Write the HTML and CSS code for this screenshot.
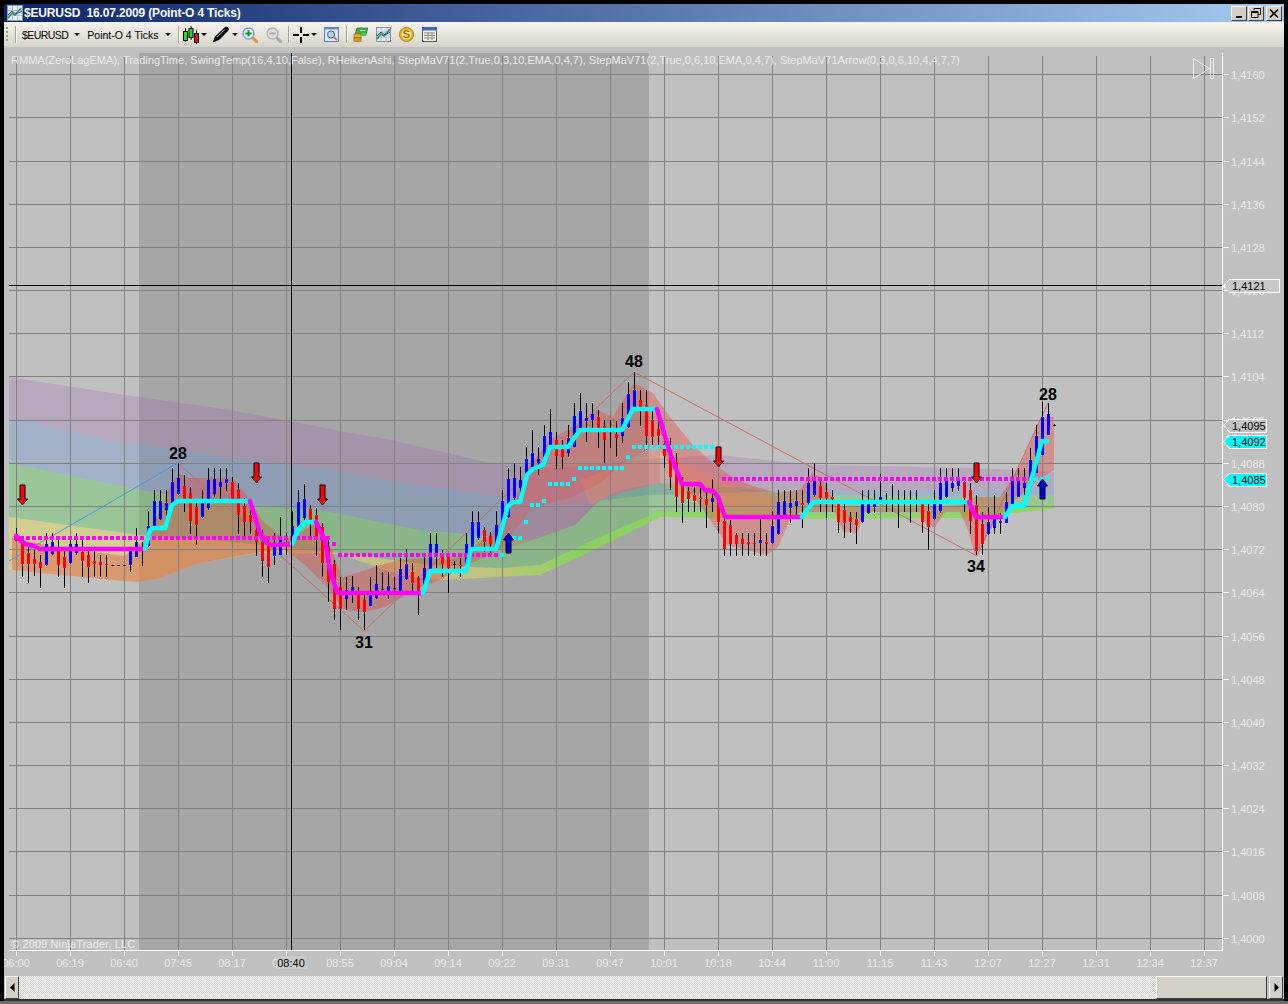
FILE: index.html
```html
<!DOCTYPE html>
<html lang="en">
<head>
    <meta charset="UTF-8">
    <meta name="viewport" content="width=device-width, initial-scale=1.0">
    <title>$EURUSD 16.07.2009 (Point-O 4 Ticks)</title>
    <link rel="stylesheet" href="styles.css">
</head>
<body>
    <div class="window">

        <!-- Title bar -->
        <div class="titlebar">
            <svg class="app-icon" width="16" height="16" viewBox="0 0 16 16">
                <rect x="0.5" y="0.5" width="15" height="15" fill="#e8eef8" stroke="#8a9ab8"/>
                <path d="M1 5.5H15M1 10.5H15M5.5 1V15M10.5 1V15" stroke="#b4c2da"/>
                <path d="M1 13L5 8L8 10L14 3" fill="none" stroke="#2a9a3a" stroke-width="1.6"/>
                <path d="M1 10L5 6L9 9L15 6" fill="none" stroke="#2050c0"/>
            </svg>
            <span class="title-text">$EURUSD&nbsp; 16.07.2009 (Point-O 4 Ticks)</span>
            <div class="window-buttons">
                <div class="win-btn">
                    <svg width="9" height="9" viewBox="0 0 9 9"><rect x="1" y="7" width="6" height="2"/></svg>
                </div>
                <div class="win-btn">
                    <svg width="10" height="10" viewBox="0 0 10 10"><path d="M3 0.5H9.5V6.5H7.5M3 2V0.5M0.5 3.5H7V9.5H0.5Z M0.5 4.5H7" fill="none" stroke="#000"/></svg>
                </div>
                <div class="win-btn win-close">
                    <svg width="10" height="9" viewBox="0 0 10 9"><path d="M1 0.5L9 8.5M9 0.5L1 8.5" stroke="#000" stroke-width="1.6"/></svg>
                </div>
            </div>
        </div>

        <!-- Toolbar -->
        <div class="toolbar">
            <div class="grip"></div>
            <div class="sep sep-first"></div>
            <span class="tool-text">$EURUSD</span>
            <span class="caret caret-text"></span>
            <span class="tool-text tool-period">Point-O 4 Ticks</span>
            <span class="caret caret-text"></span>
            <div class="sep sep-a"></div>

            <svg class="tool-icon icon-candles" width="16" height="18" viewBox="0 0 16 18">
                <path d="M2.5 2V16M8 0V14M13.5 4V18" stroke="#000"/>
                <rect x="0.5" y="5.5" width="4" height="9" fill="#20e020" stroke="#000"/>
                <rect x="6" y="2.5" width="4" height="9" fill="#20e020" stroke="#000"/>
                <rect x="11.5" y="7.5" width="4" height="9" fill="#e01010" stroke="#000"/>
            </svg>
            <span class="caret"></span>

            <svg class="tool-icon icon-pen" width="18" height="17" viewBox="0 0 18 17">
                <path d="M0.5 16.5L3 10.5L13 1C15 0 18 2.5 16.5 4.5L7 14Z" fill="#000"/>
                <path d="M5 11L13 3.5" stroke="#b0b0b0"/>
            </svg>
            <span class="caret"></span>

            <svg class="tool-icon icon-zoom-in" width="16" height="16" viewBox="0 0 16 16">
                <path d="M10 10L15 15" stroke="#e89038" stroke-width="3" stroke-linecap="round"/>
                <circle cx="6.5" cy="6.5" r="5.5" fill="#e4f0f8" stroke="#7aa4c0" stroke-width="1.4"/>
                <path d="M6.5 3.5V9.5M3.5 6.5H9.5" stroke="#109030" stroke-width="2"/>
            </svg>
            <svg class="tool-icon icon-zoom-out" width="16" height="16" viewBox="0 0 16 16">
                <path d="M10 10L15 15" stroke="#a8a8a8" stroke-width="3" stroke-linecap="round"/>
                <circle cx="6.5" cy="6.5" r="5.5" fill="#dedede" stroke="#b0b0b0" stroke-width="1.4"/>
                <path d="M3.5 6.5H9.5" stroke="#a8a8a8" stroke-width="2"/>
            </svg>
            <div class="sep sep-b"></div>

            <svg class="tool-icon icon-cross" width="16" height="16" viewBox="0 0 16 16">
                <path d="M8 0V6M8 10V16M0 8H6M10 8H16" stroke="#000" stroke-width="2"/>
            </svg>
            <span class="caret"></span>

            <svg class="tool-icon icon-props" width="15" height="15" viewBox="0 0 15 15">
                <rect x="0.5" y="0.5" width="14" height="14" fill="#dce8f6" stroke="#5a80b8"/>
                <rect x="0.5" y="0.5" width="14" height="2" fill="#6a90c8"/>
                <circle cx="7" cy="7.5" r="3.5" fill="#b8d0ea" stroke="#47658c"/>
                <path d="M10 10L13 13" stroke="#e07030" stroke-width="2"/>
            </svg>
            <div class="sep sep-c"></div>

            <svg class="tool-icon icon-stack" width="15" height="15" viewBox="0 0 15 15">
                <path d="M4 1H15L13 7H5L2 8Z" fill="#3cb043" stroke="#1f6a28" stroke-width="0.6"/>
                <path d="M7 3.5H12" stroke="#c8f0c0"/>
                <rect x="1" y="7" width="7" height="4" fill="#e8b030" stroke="#8a6010" stroke-width="0.6"/>
                <rect x="1" y="10.5" width="7" height="4" fill="#d89820" stroke="#8a6010" stroke-width="0.6"/>
                <path d="M8 6H14L13 9H8Z" fill="#58c050"/>
            </svg>
            <svg class="tool-icon icon-chart" width="15" height="15" viewBox="0 0 15 15">
                <rect x="0.5" y="0.5" width="14" height="14" fill="#e4eaf4" stroke="#8a8fa8"/>
                <path d="M1 5H14M1 10H14M5 1V14M10 1V14" stroke="#b4bcd0"/>
                <path d="M1 12L5 7L8 9L14 2" fill="none" stroke="#2a9a3a" stroke-width="1.6"/>
                <path d="M1 9L5 5L9 8L14 5" fill="none" stroke="#2050c0"/>
            </svg>
            <svg class="tool-icon icon-coin" width="15" height="15" viewBox="0 0 15 15">
                <circle cx="7.5" cy="7.5" r="7" fill="#f0b818" stroke="#b07c08"/>
                <circle cx="7.5" cy="7.5" r="4.8" fill="#f8e8a0"/>
                <text class="coin-text" x="7.5" y="11.4" text-anchor="middle">S</text>
            </svg>
            <svg class="tool-icon icon-table" width="15" height="15" viewBox="0 0 15 15">
                <rect x="0.5" y="0.5" width="14" height="14" fill="#f4f2e4" stroke="#4c5c78"/>
                <rect x="0.5" y="0.5" width="14" height="3" fill="#3c6cc4"/>
                <path d="M2 6H13M2 8.5H13M2 11H13" stroke="#8a8f80"/>
                <path d="M6 5V13M10 5V13" stroke="#8a8f80"/>
            </svg>
        </div>

        <!-- Chart panel, filled by chart.js -->
        <div class="chart" id="chart"></div>

        <!-- Horizontal scroll bar -->
        <div class="scrollbar">
            <div class="scroll-btn">
                <svg width="5" height="9" viewBox="0 0 5 9"><path d="M4.5 0V9L0 4.5Z"/></svg>
            </div>
            <div class="scroll-track"></div>
            <div class="scroll-thumb"></div>
            <div class="scroll-btn scroll-btn-right">
                <svg width="5" height="9" viewBox="0 0 5 9"><path d="M0.5 0V9L5 4.5Z"/></svg>
            </div>
        </div>
    </div>

    <script src="chart.js"></script>
</body>
</html>
```

FILE: styles.css
```css
body {
    margin: 0;
    height: 1004px;
    overflow: hidden; /* Prevent scrollbars */
    background-color: #000;
    font-family: "Liberation Sans", Arial, sans-serif;
}

.window {
    display: flex;
    flex-direction: column;
    width: 1280px;
    height: 997px;
    padding: 4px 4px 0 4px;
    border-bottom: 3px solid #6e6e6e;
}

/* Title bar */
.titlebar {
    display: flex;
    align-items: center;
    height: 18px;
    padding: 0 2px 0 3px;
    background: linear-gradient(to right, #0a246a, #a6caf0);
    color: #fff;
    flex-shrink: 0;
}

.app-icon {
    margin-right: 1px;
}

.title-text {
    font-size: 12px;
    font-weight: bold;
    letter-spacing: -0.16px;
    white-space: pre;
}

.window-buttons {
    display: flex;
    margin-left: auto;
    gap: 1px;
}

.win-btn {
    display: flex;
    align-items: center;
    justify-content: center;
    width: 14px;
    height: 13px;
    background-color: #d4d0c8;
    border: 1px solid;
    border-color: #fff #404040 #404040 #fff;
}

.win-close {
    margin-left: 1px;
}

/* Toolbar */
.toolbar {
    display: flex;
    align-items: center;
    height: 25px;
    flex-shrink: 0;
    background: linear-gradient(to bottom, #f6f4ee, #d8d4ca);
    color: #000;
}

.grip {
    width: 2px;
    height: 16px;
    margin-left: 2px;
    background-image: linear-gradient(to bottom, #a09c90 2px, transparent 2px);
    background-size: 2px 4px;
}

.sep {
    width: 1px;
    height: 17px;
    background-color: #a8a49a;
    border-right: 1px solid #fff;
}

.sep-first { margin-left: 7px; margin-right: 5px; }
.sep-a { margin-left: 7px; margin-right: 3px; }
.sep-b { margin-left: 6px; margin-right: 3px; }
.sep-c { margin-left: 7px; margin-right: 5px; }

.tool-text {
    font-family: "Liberation Sans", Arial, sans-serif;
    font-size: 10.5px;
    letter-spacing: -0.55px;
    white-space: nowrap;
}

.tool-period {
    margin-left: 7px;
    letter-spacing: 0;
}

.caret {
    width: 0;
    height: 0;
    margin-left: 2px;
    border-left: 3px solid transparent;
    border-right: 3px solid transparent;
    border-top: 3px solid #000;
}

.caret-text {
    margin-left: 6px;
}

.tool-icon {
    flex-shrink: 0;
}

.icon-candles { margin-left: 0; }
.icon-pen { margin-left: 5px; }
.icon-zoom-in { margin-left: 4px; }
.icon-zoom-out { margin-left: 8px; }
.icon-cross { margin-left: 0; }
.icon-props { margin-left: 7px; }
.icon-chart { margin-left: 8px; }
.icon-coin { margin-left: 8px; }
.icon-table { margin-left: 8px; }

.coin-text {
    font-family: "Liberation Sans", Arial, sans-serif;
    font-size: 11px;
    font-weight: bold;
    fill: #a87008;
}

/* Chart panel */
.chart {
    position: relative;
    flex: 1;
    min-height: 0;
    background-color: #c0c0c0;
}

.chart svg {
    display: block;
}

.session { fill: #a6a6a6; }
.grid { stroke: #808080; stroke-width: 1; shape-rendering: crispEdges; }
.axis { stroke: #fff; stroke-width: 1; shape-rendering: crispEdges; }
.crosshair { stroke: #000; stroke-width: 1; shape-rendering: crispEdges; }

.wick { stroke: #000; stroke-width: 1; shape-rendering: crispEdges; }
.body { shape-rendering: crispEdges; }
.up { fill: #0000ff; }
.down { fill: #ff0000; }
.flat { fill: #000; }

.swing { fill: none; stroke-width: 1; }
.swing-up { stroke: #4a94e0; }
.swing-down { stroke: #c86a62; }

.trend { fill: none; stroke-width: 4.5; stroke-linejoin: round; stroke-linecap: round; }
.trend-up { stroke: #00ffff; }
.trend-down { stroke: #ff00ff; }

.dot { shape-rendering: crispEdges; }
.dot-up { fill: #00ffff; }
.dot-down { fill: #ff00ff; }

.arrow { stroke: #000; stroke-width: 1; }
.arrow-down { fill: #ff0000; }
.arrow-up { fill: #0000e0; }

.label {
    font-family: "Liberation Sans", Arial, sans-serif;
    font-size: 11px;
    fill: #ececec;
}

.indicators {
    letter-spacing: 0.02px;
}

.copyright {
    letter-spacing: 0.12px;
}

.swing-count {
    font-family: "Liberation Sans", Arial, sans-serif;
    font-size: 16px;
    font-weight: bold;
    fill: #000;
}

.marker-text {
    font-family: "Liberation Sans", Arial, sans-serif;
    font-size: 11px;
    fill: #000;
}

.marker { stroke: #fff; stroke-width: 1; shape-rendering: crispEdges; }
.marker-cyan { fill: #00ffff; }
.marker-plain { fill: #c0c0c0; fill-opacity: 0.7; }
.marker-cross { fill: #c8c8c8; }

.time-box { fill: #cacaca; }

.play-icon { fill: none; stroke: #f0f0f0; stroke-width: 1; }

/* Scroll bar */
.scrollbar {
    display: flex;
    height: 25px;
    flex-shrink: 0;
    box-sizing: border-box;
    border-bottom: 2px solid #303030;
    background-color: #c0c0c0;
}

.scroll-btn {
    display: flex;
    align-items: center;
    justify-content: center;
    width: 12px;
    margin-left: 1px;
    background-color: #d4d0c8;
    border: 1px solid;
    border-color: #fff #404040 #404040 #fff;
    flex-shrink: 0;
}

.scroll-btn-right {
    margin-left: 2px;
    margin-right: 1px;
}

.scroll-track {
    flex: 1;
    background-image: repeating-conic-gradient(#fff 0 25%, #d4d0c8 0 50%);
    background-size: 2px 2px;
}

.scroll-thumb {
    width: 109px;
    background-color: #d4d0c8;
    border: 1px solid;
    border-color: #fff #404040 #404040 #fff;
}
```

FILE: chart.js
```js
// Draws the whole chart panel as one svg, from the data below
const SVG_NS = 'http://www.w3.org/2000/svg';
const OFFSET_X = 4;   // panel position on the page, the data is in page pixels
const OFFSET_Y = 47;

const AXIS_X = 1222;
const AXIS_Y = 950;
const PLOT_LEFT = 9;
const PLOT_TOP = 53;

const TIMES = ['06:00', '06:19', '06:40', '07:45', '08:17', '08:29', '08:55', '09:04', '09:14', '09:22', '09:31',
    '09:47', '10:01', '10:18', '10:44', '11:00', '11:15', '11:43', '12:07', '12:27', '12:31', '12:34', '12:37'];

// Cloud edges, as "x,y x,y" in page pixels
const PURPLE_TOP = '9,377 60,385 139,397 230,410 320,427 400,442 490,463 560,468 640,460 717,455 817,465 970,468 1054,472';
const BLUE_TOP = '9,417 110,440 230,458 320,468 420,486 500,497 560,505 650,495 820,490 970,490 1054,487';
const GREEN_TOP = '9,463 139,490 240,505 320,510 420,530 533,540 575,525 600,500 630,490 660,483 720,487 820,495 970,497 1054,495';
const YELLOW_TOP = '9,517 139,535 213,540 340,553 430,565 500,568 540,565 600,537 660,511 730,512 800,514 960,513 1054,504';
const YELLOW_BOTTOM = '9,570 60,575 123,581 139,582 160,578 200,563 260,553 340,554 400,575 440,580 500,577 540,575 600,547 660,517 730,518 800,519 960,518 1054,509';

const RED_TOP = '12,538 60,548 125,556 145,540 160,510 172,482 180,474 190,478 232,478 248,497 262,520 285,540 305,530 318,522 330,545 342,577 360,572 380,565 400,560 420,558 450,560 472,548 490,535 510,510 530,465 550,440 587,418 597,410 613,417 628,392 634,383 653,393 670,417 683,433 693,445 717,467 733,477 750,485 777,493 800,490 812,473 822,478 837,507 917,508 960,505 975,497 1000,497 1020,465 1035,432 1042,417 1054,417';
const RED_BOTTOM = '12,570 60,575 123,581 139,582 160,578 200,563 262,552 285,550 305,565 325,585 345,610 364,612 385,607 415,590 440,580 463,567 500,550 515,530 533,507 573,497 600,483 627,460 653,447 660,450 680,480 700,505 727,545 767,555 778,547 790,520 800,512 835,512 843,532 857,533 865,512 920,512 927,527 935,527 945,512 960,512 968,530 975,555 982,545 990,530 998,518 1010,505 1024,492 1040,478 1054,470';
const PEACH = '580,480 620,465 660,450 700,470 740,490 770,497 790,512 700,508 660,483 620,490 590,505';
const PINK = '500,550 533,507 573,497 600,483 627,460 653,447 660,450 660,483 630,490 600,500 575,525 533,540';

// Candles from left to right, 6px apart: [high, body top, body bottom, low, colour]
const CANDLES = [
    [528,534,541,541,'r'],[537,540,564,577,'r'],[543,553,564,583,'r'],[550,559,564,576,'r'],[555,562,568,588,'r'],
    [533,544,565,566,'b'],[533,542,554,555,'b'],[540,551,565,577,'r'],[548,557,568,588,'r'],[537,544,563,564,'b'],
    [533,544,553,555,'b'],[540,552,561,577,'r'],[550,555,567,583,'r'],[551,561,564,577,'r'],[555,562,565,577,'r'],
    [555,564,565,577,'r'],[565,565,566,566,'k'],[565,565,566,566,'k'],[565,565,566,566,'k'],[547,550,565,572,'b'],
    [528,542,557,557,'b'],[542,550,551,566,'k'],[511,526,546,547,'b'],[490,501,527,528,'b'],[490,501,519,520,'b'],
    [490,503,510,516,'b'],[468,482,503,503,'b'],[463,478,494,495,'b'],[475,486,499,512,'r'],[487,493,521,534,'r'],
    [500,507,525,545,'r'],[490,500,517,518,'b'],[468,480,508,510,'b'],[468,479,494,497,'b'],[468,482,487,499,'b'],
    [468,479,483,491,'b'],[477,482,499,500,'r'],[483,490,515,534,'r'],[498,506,522,536,'r'],[510,515,522,534,'r'],
    [520,530,542,556,'r'],[530,542,561,577,'r'],[537,543,567,583,'r'],[533,543,556,565,'b'],[517,538,555,555,'b'],
    [533,544,545,555,'k'],[511,526,545,546,'b'],[490,502,527,527,'b'],[484,499,518,520,'b'],[505,509,520,537,'r'],
    [508,515,537,556,'r'],[523,527,563,577,'r'],[537,547,582,602,'r'],[560,564,609,620,'r'],[577,587,609,630,'r'],
    [577,590,599,610,'b'],[576,587,593,603,'b'],[587,593,609,620,'r'],[593,600,612,630,'r'],[577,593,606,606,'b'],
    [565,584,598,599,'b'],[572,589,590,590,'k'],[572,586,591,599,'b'],[577,588,589,593,'k'],[558,569,591,591,'b'],
    [549,564,579,580,'b'],[563,572,583,593,'r'],[576,578,593,615,'r'],[557,568,590,591,'b'],[533,544,570,572,'b'],
    [533,544,556,568,'b'],[550,553,564,577,'r'],[554,557,568,593,'r'],[561,564,565,570,'k'],[558,565,566,577,'r'],
    [533,544,567,567,'b'],[511,522,548,550,'b'],[511,522,538,540,'b'],[527,530,542,552,'r'],[532,536,544,553,'r'],
    [511,525,547,548,'b'],[490,501,525,527,'b'],[468,479,517,518,'b'],[463,478,498,500,'b'],[467,480,488,502,'b'],
    [447,459,477,478,'b'],[430,453,467,468,'b'],[447,459,463,475,'b'],[425,436,457,458,'b'],[409,432,447,448,'b'],
    [432,440,456,469,'r'],[440,449,457,469,'r'],[425,438,453,457,'b'],[403,416,447,447,'b'],[393,411,430,430,'b'],
    [403,418,421,442,'b'],[403,414,420,430,'b'],[410,417,430,448,'r'],[420,426,440,463,'r'],[420,431,432,448,'k'],
    [421,434,438,457,'r'],[403,418,436,443,'b'],[382,394,427,428,'b'],[372,390,409,410,'b'],[390,400,407,426,'r'],
    [390,405,436,450,'r'],[410,420,437,445,'r'],[420,429,436,445,'r'],[435,444,456,468,'r'],[438,450,477,490,'r'],
    [453,462,497,512,'r'],[477,483,503,523,'r'],[487,491,499,512,'r'],[487,495,501,512,'r'],[487,498,499,512,'r'],
    [490,499,505,528,'r'],[479,498,502,512,'b'],[495,497,522,533,'r'],[513,521,549,556,'r'],[520,525,544,556,'r'],
    [533,535,544,556,'r'],[533,539,544,556,'r'],[533,542,544,556,'r'],[533,543,544,556,'r'],[519,540,543,556,'b'],
    [533,542,544,556,'r'],[511,526,543,544,'b'],[490,502,534,535,'b'],[490,501,515,516,'b'],[490,503,508,523,'b'],
    [490,501,506,516,'b'],[490,503,505,528,'r'],[468,483,503,505,'b'],[463,481,495,497,'b'],[477,486,498,512,'r'],
    [483,492,498,518,'r'],[490,497,499,512,'r'],[500,503,522,533,'r'],[502,510,523,538,'r'],[512,517,522,533,'r'],
    [512,519,525,544,'r'],[490,504,522,523,'b'],[490,503,513,514,'b'],[490,503,507,513,'b'],[474,497,501,501,'b'],
    [493,503,504,512,'k'],[484,503,504,512,'k'],[490,503,504,528,'r'],[490,503,504,512,'k'],[490,503,504,523,'k'],
    [490,503,504,512,'k'],[500,503,522,533,'r'],[503,511,527,550,'r'],[490,503,519,520,'b'],[468,483,511,513,'b'],
    [468,481,497,498,'b'],[468,483,488,492,'b'],[468,481,486,491,'b'],[477,482,498,512,'r'],[483,490,521,534,'r'],
    [495,505,551,555,'r'],[512,524,544,555,'r'],[507,522,534,535,'b'],[495,519,528,534,'b'],[513,521,523,534,'b'],
    [492,502,523,523,'b'],[468,480,505,506,'b'],[468,480,497,497,'b'],[468,483,488,495,'b'],[448,460,487,487,'b'],
    [425,436,473,473,'b'],[402,417,455,455,'b'],[403,414,435,435,'b'],[424,425,426,426,'k']
];

// Thick step line, each part is one colour
const TREND = [
    ['down', '16,536 25,544 34,546 40,549 145,549'],
    ['up', '145,549 150,530 153,528 165,528 172,505 178,501 250,501'],
    ['down', '250,501 260,533 267,543 272,545 292,544'],
    ['up', '292,544 298,530 305,522 316,522'],
    ['down', '316,522 325,540 330,570 337,592 342,593 423,593'],
    ['up', '423,593 430,571 466,571 471,549 496,549 508,506 513,502 520,502 527,475 533,469 543,465 550,447 568,447 580,430 622,430 633,409 657,409'],
    ['down', '657,409 670,453 682,484 700,484 705,490 713,491 718,497 725,517 802,517'],
    ['up', '802,517 813,502 969,502'],
    ['down', '969,502 976,517 1005,517'],
    ['up', '1005,517 1012,506 1024,506 1042,441 1047,441']
];

// Dotted stop line: [colour, first x, last x, y]
const DOTS = [
    ['down', 16, 328, 538], ['down', 334, 334, 544], ['down', 340, 496, 555],
    ['up', 502, 502, 555], ['up', 514, 520, 538], ['up', 526, 526, 522], ['up', 532, 538, 505],
    ['up', 544, 544, 501], ['up', 550, 568, 484], ['up', 574, 574, 479], ['up', 580, 622, 468],
    ['up', 628, 628, 457], ['up', 634, 712, 447],
    ['down', 724, 1030, 479], ['up', 1036, 1048, 479]
];

// Signal arrows: [x, top y, direction]
const ARROWS = [
    [22, 485, 'down'], [256, 463, 'down'], [322, 485, 'down'], [718, 447, 'down'], [976, 463, 'down'],
    [508, 533, 'up'], [1042, 479, 'up']
];

const chart = document.getElementById('chart');
const svg = document.createElementNS(SVG_NS, 'svg');
svg.setAttribute('width', 1280);
svg.setAttribute('height', 929);
svg.setAttribute('viewBox', `${OFFSET_X} ${OFFSET_Y} 1280 929`);
chart.appendChild(svg);

function add(tag, cls, attrs, text) {
    const el = document.createElementNS(SVG_NS, tag);
    if (cls) el.setAttribute('class', cls);
    for (const key in attrs) el.setAttribute(key, attrs[key]);
    if (text) el.textContent = text;
    svg.appendChild(el);
    return el;
}

function line(cls, x1, y1, x2, y2) {
    return add('line', cls, { x1, y1, x2, y2 });
}

// Ribbon between two edges, the second edge is walked backwards
function ribbon(top, bottom, fill, opacity) {
    const back = bottom.split(' ').reverse().join(' ');
    add('polygon', '', { points: `${top} ${back}`, fill, 'fill-opacity': opacity });
}

function drawClouds() {
    // Yellow turns to a stronger lime on its way to the right
    const defs = add('defs', '', {});
    const grad = document.createElementNS(SVG_NS, 'linearGradient');
    grad.setAttribute('id', 'slow');
    grad.setAttribute('gradientUnits', 'userSpaceOnUse');
    grad.setAttribute('x1', 470);
    grad.setAttribute('x2', 570);
    grad.setAttribute('y1', 0);
    grad.setAttribute('y2', 0);
    [['0', '#e4dc60', 0.5], ['1', '#84dc50', 0.8]].forEach(([offset, color, alpha]) => {
        const stop = document.createElementNS(SVG_NS, 'stop');
        stop.setAttribute('offset', offset);
        stop.setAttribute('stop-color', color);
        stop.setAttribute('stop-opacity', alpha);
        grad.appendChild(stop);
    });
    defs.appendChild(grad);

    ribbon(PURPLE_TOP, BLUE_TOP, '#a05ab9', 0.24);
    ribbon(BLUE_TOP, GREEN_TOP, '#4682e1', 0.24);
    ribbon(GREEN_TOP, YELLOW_TOP, '#5acd5a', 0.38);
    ribbon(YELLOW_TOP, YELLOW_BOTTOM, 'url(#slow)', 1);
    add('polygon', '', { points: PEACH, fill: 'rgba(240,170,100,0.3)' });
    add('polygon', '', { points: PINK, fill: 'rgba(225,70,70,0.22)' });
    ribbon(RED_TOP, RED_BOTTOM, '#e83c32', 0.36);
}

function drawGrid() {
    for (let k = 0; k < TIMES.length; k++) {
        const x = 16.5 + 54 * k;
        line('grid', x, 56, x, AXIS_Y);
    }
    for (let k = 0; k <= 20; k++) {
        const y = Math.floor(74.7 + 43.18 * k) + 0.5;
        line('grid', PLOT_LEFT, y, AXIS_X, y);
    }
}

function drawAxes() {
    line('axis', AXIS_X + 0.5, PLOT_TOP, AXIS_X + 0.5, AXIS_Y + 0.5);
    line('axis', PLOT_LEFT, AXIS_Y + 0.5, AXIS_X + 0.5, AXIS_Y + 0.5);

    TIMES.forEach((time, k) => {
        const x = 16.5 + 54 * k;
        line('axis', x, AXIS_Y, x, 956);
        add('text', 'label', { x: 16 + 54 * k, y: 967, 'text-anchor': 'middle' }, time);
    });

    for (let k = 0; k <= 20; k++) {
        const y = Math.floor(74.7 + 43.18 * k);
        line('axis', AXIS_X, y + 0.5, AXIS_X + 7, y + 0.5);
        const price = String(4160 - 8 * k);
        add('text', 'label', { x: 1231, y: y + 5 }, `1,${price}`);
    }
}

function drawCandles() {
    CANDLES.forEach(([high, top, bottom, low, colour], i) => {
        const x = 16 + 6 * i;
        line('wick', x + 0.5, high, x + 0.5, low);
        const cls = colour === 'b' ? 'up' : colour === 'r' ? 'down' : 'flat';
        add('rect', `body ${cls}`, { x: x - 1, y: top, width: 3, height: Math.max(bottom - top, 1) });
    });
}

function drawSwings() {
    add('polyline', 'swing swing-up', { points: '9,561 178,463' });
    add('polyline', 'swing swing-down', { points: '178,463 364,631 634,372 977,556 1048,403' });
    [[178, 459, '28'], [364, 648, '31'], [634, 367, '48'], [976, 572, '34'], [1048, 400, '28']].forEach(([x, y, text]) => {
        add('text', 'swing-count', { x, y, 'text-anchor': 'middle' }, text);
    });
}

function drawStops() {
    DOTS.forEach(([colour, first, last, y]) => {
        for (let x = first; x <= last; x += 6) {
            add('rect', `dot dot-${colour}`, { x: x - 2, y: y - 2, width: 4, height: 4 });
        }
    });
}

function drawArrows() {
    ARROWS.forEach(([x, top, dir]) => {
        const c = x + 0.5;
        const points = dir === 'down'
            ? `${c - 2.5},${top} ${c + 2.5},${top} ${c + 2.5},${top + 14} ${c + 5},${top + 14} ${c},${top + 20} ${c - 5},${top + 14} ${c - 2.5},${top + 14}`
            : `${c},${top} ${c + 5},${top + 7} ${c + 2.5},${top + 7} ${c + 2.5},${top + 20} ${c - 2.5},${top + 20} ${c - 2.5},${top + 7} ${c - 5},${top + 7}`;
        add('polygon', `arrow arrow-${dir}`, { points });
    });
}

// Price tag on the axis, pointing at the line
function priceMarker(y, width, text, cls) {
    const top = y - 6.5;
    const points = `1223.5,${y} 1229.5,${top} ${1223.5 + width},${top} ${1223.5 + width},${top + 13} 1229.5,${top + 13}`;
    add('polygon', `marker ${cls}`, { points });
    add('text', 'marker-text', { x: 1232, y: y + 4 }, text);
}

function drawCrosshair() {
    line('crosshair', 291.5, PLOT_TOP, 291.5, AXIS_Y);
    line('crosshair', PLOT_LEFT, 285.5, AXIS_X, 285.5);
    add('rect', 'time-box', { x: 277, y: 956, width: 30, height: 13 });
    add('text', 'marker-text', { x: 291, y: 967, 'text-anchor': 'middle' }, '08:40');
}

// The darker band is the trading session
add('rect', 'session', { x: 139, y: PLOT_TOP, width: 510, height: AXIS_Y - PLOT_TOP });
drawClouds();
drawGrid();
drawSwings();
drawCandles();
drawStops();
TREND.forEach(([colour, points]) => add('polyline', `trend trend-${colour}`, { points }));
drawArrows();
drawAxes();
drawCrosshair();

priceMarker(286, 56, '1,4121', 'marker-cross');
priceMarker(425.5, 43, '1,4095', 'marker-plain');
priceMarker(441.5, 43, '1,4092', 'marker-cyan');
priceMarker(479.5, 43, '1,4085', 'marker-cyan');

add('text', 'label indicators', { x: 11, y: 64 }, 'RMMA(ZeroLagEMA), TradingTime, SwingTemp(16,4,10,False), RHeikenAshi, StepMaV71(2,True,0,3,10,EMA,0,4,7), StepMaV71(2,True,0,6,10,EMA,0,4,7), StepMaV71Arrow(0,3,0,6,10,4,4,7,7)');
add('text', 'label copyright', { x: 11, y: 948 }, '\u00a9 2009 NinjaTrader, LLC');

add('polygon', 'play-icon', { points: '1193.5,58.5 1193.5,78.5 1209.5,68.5' });
add('rect', 'play-icon', { x: 1210.5, y: 58.5, width: 3, height: 20 });
```
